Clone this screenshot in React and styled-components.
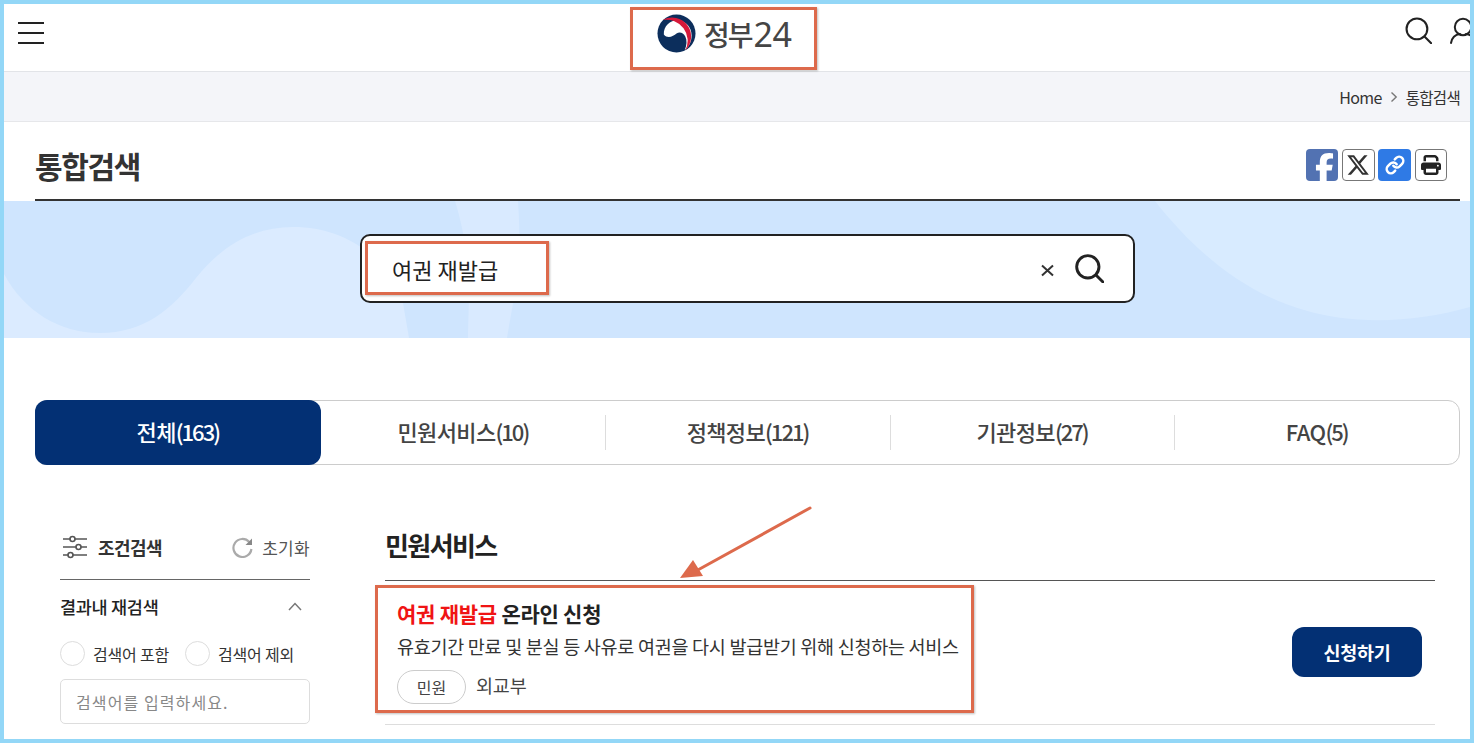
import React from "react";
import styled, { createGlobalStyle } from "styled-components";
import { FaFacebookF, FaXTwitter, FaPrint } from "react-icons/fa6";
import { Link as LinkIcon } from "lucide-react";

const Global = createGlobalStyle`
  html, body { margin: 0; padding: 0; background: #fff; }
  * { box-sizing: border-box; }
  body { font-family: "Noto Sans CJK KR", "Noto Sans", sans-serif; color: #222; }
`;

const Frame = styled.div`
  position: relative;
  width: 1474px;
  height: 743px;
  border: 4px solid #93d7f7;
  overflow: hidden;
  background: #fff;
`;

const Header = styled.header`
  display: flex;
  align-items: center;
  height: 68px;
  padding-left: 14px;
  border-bottom: 1px solid #e2e4e8;
`;

const MenuButton = styled.div`
  display: flex;
  flex-direction: column;
  gap: 8px;
  width: 26px;
  margin-top: -10px;
  span { display: block; height: 2px; background: #222; }
`;

const Logo = styled.div`
  display: flex;
  align-items: center;
  margin: -8px 0 0 613px;
  color: #454545;
  svg { display: block; margin-right: 8px; }
`;

const LogoKo = styled.span`
  font-size: 28px;
  font-weight: 500;
  letter-spacing: -2px;
  line-height: 38px;
  margin-right: 2px;
`;

const LogoNum = styled.span`
  font-family: "Noto Sans", sans-serif;
  font-size: 34px;
  letter-spacing: -0.6px;
  line-height: 38px;
`;

const HeaderIcons = styled.div`
  display: flex;
  gap: 17px;
  margin-left: auto;
  margin-right: -11px;
  margin-top: -14px;
`;

const Crumbs = styled.nav`
  display: flex;
  align-items: center;
  justify-content: flex-end;
  gap: 8px;
  height: 50px;
  padding-right: 10px;
  background: #f4f5f9;
  border-bottom: 1px solid #e6e7ea;
  font-size: 15.5px;
  letter-spacing: -0.7px;
  color: #333;
`;

const CrumbHome = styled.span`
  font-size: 16px;
  letter-spacing: -0.6px;
`;

const TitleRow = styled.div`
  display: flex;
  align-items: center;
  justify-content: space-between;
  height: 79px;
  margin: 0 10px 0 31px;
  padding-right: 13px;
  padding-top: 8px;
  border-bottom: 2px solid #333;
`;

const PageTitle = styled.h1`
  margin: 0;
  font-size: 30px;
  font-weight: 700;
  letter-spacing: -1.35px;
  color: #333;
  line-height: 40px;
`;

const ShareRow = styled.div`
  display: flex;
  gap: 3.67px;
`;

const ShareBtn = styled.div`
  display: flex;
  align-items: center;
  justify-content: center;
  overflow: hidden;
  width: ${(p) => p.$w || 33}px;
  height: 32px;
  border-radius: 4px;
  background: ${(p) => p.$bg || "#fff"};
  border: ${(p) => (p.$bg ? "none" : "1px solid #777")};
  color: ${(p) => (p.$bg ? "#fff" : "#222")};
`;

const Hero = styled.section`
  position: relative;
  height: 137px;
  padding: 33px 0 0 356px;
  background: #cfe5fe;
`;

const HeroArt = styled.svg`
  position: absolute;
  left: 0;
  top: 0;
`;

const SearchBox = styled.div`
  position: relative;
  display: flex;
  align-items: center;
  width: 775px;
  height: 69px;
  padding: 0 29px 0 30px;
  border: 2px solid #222;
  border-radius: 10px;
  background: #fff;
`;

const SearchText = styled.span`
  flex: 1;
  padding-top: 1px;
  font-size: 22px;
  letter-spacing: 0;
  color: #222;
`;

const ClearMark = styled.svg`
  margin: 3px 21px 0 0;
`;

const Tabs = styled.div`
  display: grid;
  grid-template-columns: repeat(5, 1fr);
  height: 65px;
  margin: 62px 10px 0 31px;
  border: 1px solid #ccc;
  border-radius: 12px;
`;

const Tab = styled.div`
  position: relative;
  display: flex;
  align-items: center;
  justify-content: center;
  margin: ${(p) => (p.$active ? "-1px 0 -1px -1px" : "0")};
  padding-bottom: 3px;
  border-radius: ${(p) => (p.$active ? "12px" : "0")};
  background: ${(p) => (p.$active ? "#033074" : "transparent")};
  color: ${(p) => (p.$active ? "#fff" : "#444")};
  font-size: 22px;
  font-weight: 500;
  letter-spacing: -0.65px;
  &::after {
    content: "";
    display: ${(p) => (p.$sep ? "block" : "none")};
    position: absolute;
    right: -1px;
    top: 14px;
    bottom: 14px;
    width: 1px;
    background: #ddd;
  }
`;

const Count = styled.span`
  letter-spacing: -2px;
`;

const Body = styled.div`
  display: flex;
  gap: 75px;
  margin: 0 0 0 56px;
`;

const Side = styled.aside`
  width: 250px;
  padding-top: 64px;
`;

const SideHead = styled.div`
  display: flex;
  align-items: center;
  justify-content: space-between;
  height: 51px;
  padding-bottom: 14px;
  border-bottom: 1px solid #666;
`;

const SideTitle = styled.div`
  display: flex;
  align-items: center;
  gap: 10px;
  margin-left: 2px;
  font-size: 18px;
  font-weight: 700;
  letter-spacing: -0.56px;
  color: #333;
`;

const Reset = styled.div`
  display: flex;
  align-items: center;
  gap: 9px;
  font-size: 17px;
  letter-spacing: 0.3px;
  color: #555;
`;

const SideSub = styled.div`
  display: flex;
  align-items: center;
  justify-content: space-between;
  height: 26px;
  margin-top: 13px;
  padding-right: 8px;
  font-size: 17.5px;
  font-weight: 500;
  letter-spacing: -0.3px;
  color: #222;
`;

const RadioRow = styled.div`
  display: flex;
  align-items: center;
  margin-top: 22px;
  font-size: 16px;
  letter-spacing: -0.2px;
  color: #333;
`;

const Radio = styled.span`
  width: 25px;
  height: 25px;
  margin: ${(p) => (p.$second ? "0 8px 0 16px" : "0 8px 0 0")};
  border: 1px solid #ddd;
  border-radius: 50%;
`;

const SideInput = styled.div`
  display: flex;
  align-items: center;
  height: 45px;
  margin-top: 13px;
  padding-left: 15px;
  border: 1px solid #ddd;
  border-radius: 5px;
  font-size: 16px;
  letter-spacing: 1.1px;
  color: #888;
`;

const Main = styled.main`
  width: 1050px;
  padding-top: 60px;
`;

const SectionTitle = styled.h2`
  display: flex;
  align-items: center;
  height: 56px;
  margin: 0;
  padding-bottom: 17px;
  border-bottom: 1px solid #555;
  font-size: 26px;
  font-weight: 700;
  letter-spacing: -1.6px;
  color: #222;
`;

const ResultRow = styled.article`
  display: flex;
  align-items: center;
  justify-content: space-between;
  height: 144px;
  padding: 0 13px 2px 12px;
  border-bottom: 1px solid #ddd;
`;

const ResultBody = styled.div`
  display: flex;
  flex-direction: column;
`;

const ResultTitle = styled.div`
  font-size: 21px;
  font-weight: 700;
  letter-spacing: -0.25px;
  line-height: 28px;
  color: #222;
  em { font-style: normal; color: #f01414; }
`;

const ResultDesc = styled.div`
  margin-top: 7px;
  font-size: 18.5px;
  letter-spacing: -0.27px;
  line-height: 24px;
  color: #333;
`;

const MetaRow = styled.div`
  display: flex;
  align-items: center;
  gap: 10px;
  margin-top: 12px;
  color: #444;
`;

const Agency = styled.span`
  margin-top: -4px;
  font-size: 18.5px;
  letter-spacing: -0.2px;
`;

const Pill = styled.span`
  display: flex;
  align-items: center;
  justify-content: center;
  width: 69px;
  height: 34px;
  border: 1px solid #ccc;
  border-radius: 17px;
  font-size: 16px;
  color: #444;
`;

const ApplyButton = styled.div`
  display: flex;
  align-items: center;
  justify-content: center;
  width: 130px;
  height: 50px;
  margin-top: 1px;
  border-radius: 12px;
  background: #033074;
  color: #fff;
  font-size: 18.5px;
  font-weight: 700;
  letter-spacing: -0.3px;
`;

const Callout = styled.div`
  position: absolute;
  left: ${(p) => p.$x}px;
  top: ${(p) => p.$y}px;
  width: ${(p) => p.$w}px;
  height: ${(p) => p.$h}px;
  border: 3px solid #dd6a4c;
  box-shadow: 1px 1px 2px rgba(0, 0, 0, 0.25);
  pointer-events: none;
`;

const ArrowLayer = styled.svg`
  position: absolute;
  left: 0;
  top: 0;
  pointer-events: none;
`;

const SearchIcon = ({ size, w = 2 }) => (
  <svg width={size} height={size} viewBox="0 0 26 26" fill="none" stroke="#222" strokeWidth={w} strokeLinecap="round">
    <circle cx="11.5" cy="11.5" r="10" />
    <path d="M19 19l6.2 6.2" />
  </svg>
);

const tabs = [
  ["전체", "(163)", true, false],
  ["민원서비스", "(10)", false, true],
  ["정책정보", "(121)", false, true],
  ["기관정보", "(27)", false, true],
  ["FAQ", "(5)", false, false],
];

export default function App() {
  return (
    <>
      <Global />
      <Frame>
        <Header>
          <MenuButton><span /><span /><span /></MenuButton>
          <Logo>
            <svg width="39" height="39" viewBox="0 0 40 40">
              <circle cx="20" cy="20" r="19.5" fill="#0c2e5c" />
              <path d="M7 21 C6.5 12 14 6 22 6.5 C30 7.5 35.5 14 35.5 22 C35.5 28 33 33.5 28.5 37 C30.5 32 31 27 29 23 C27 19 23 18 20 20 C17 22.5 11 26 7 21Z" fill="#fff" />
              <path d="M6 6.2 A19.5 19.5 0 0 1 29 37.3 A21.5 21.5 0 0 0 6 6.2Z" fill="#d6193a" />
            </svg>
            <LogoKo>정부</LogoKo>
            <LogoNum>24</LogoNum>
          </Logo>
          <HeaderIcons>
            <SearchIcon size={27} />
            <svg width="32" height="27" viewBox="0 0 32 27" fill="none" stroke="#222" strokeWidth="2" strokeLinecap="round">
              <circle cx="14" cy="10" r="8.2" />
              <path d="M2 26 C3 20 7 17.5 11 17 M17 17 C21 17.5 25 20 26 26" />
            </svg>
          </HeaderIcons>
        </Header>
        <Crumbs>
          <CrumbHome>Home</CrumbHome>
          <svg width="8" height="12" viewBox="0 0 8 12" fill="none" stroke="#777" strokeWidth="1.4"><path d="M1.5 1.5L6.2 6l-4.7 4.5" /></svg>
          <span>통합검색</span>
        </Crumbs>
        <TitleRow>
          <PageTitle>통합검색</PageTitle>
          <ShareRow>
            <ShareBtn $bg="#5272b2" $w={32}><FaFacebookF size={30} style={{ marginTop: 6, marginLeft: 5 }} /></ShareBtn>
            <ShareBtn><FaXTwitter size={24} color="#333" /></ShareBtn>
            <ShareBtn $bg="#2f7ae5"><LinkIcon size={20} strokeWidth={3} /></ShareBtn>
            <ShareBtn $w={32}><FaPrint size={20} color="#222" /></ShareBtn>
          </ShareRow>
        </TitleRow>
        <Hero>
          <HeroArt width="1466" height="137" viewBox="0 0 1466 137">
            <path fill="#dbebff" d="M0 73 C20 110 55 132 96 132 C140 132 168 108 192 77 C220 42 252 26 289 26 C320 26 345 36 365 52 L399 102 L405 137 L0 137Z" />
            <path fill="#d9eaff" d="M451 0 C456 16 462 40 464 70 C466 95 464 120 464 137 L503 137 C506 118 512 90 515 60 C516 35 515 15 514 0Z" />
            <path fill="#d8ebff" d="M1151 0 C1190 50 1240 92 1300 109 C1350 124 1410 122 1466 106 L1466 0Z" />
          </HeroArt>
          <SearchBox>
            <SearchText>여권 재발급</SearchText>
            <ClearMark width="13" height="13" viewBox="0 0 13 13" stroke="#333" strokeWidth="2"><path d="M1 1.5l11 10M12 1.5l-11 10" /></ClearMark>
            <SearchIcon size={29} w={2.6} />
          </SearchBox>
        </Hero>
        <Tabs>
          {tabs.map(([label, count, active, sep]) => (
            <Tab key={label} $active={active} $sep={sep}>{label}<Count>{count}</Count></Tab>
          ))}
        </Tabs>
        <Body>
          <Side>
            <SideHead>
              <SideTitle>
                <svg width="26" height="24" viewBox="0 0 26 24" fill="none" stroke="#555" strokeWidth="1.6">
                  <path d="M1 4h7M13 4h12M1 12h13M19 12h6M1 20h5M11 20h14" />
                  <circle cx="10.5" cy="4" r="2.5" /><circle cx="16.5" cy="12" r="2.5" /><circle cx="8.5" cy="20" r="2.5" />
                </svg>
                조건검색
              </SideTitle>
              <Reset>
                <svg width="21" height="21" viewBox="0 0 21 21" fill="none">
                  <path d="M17.2 5 A9 9 0 1 0 19.4 12" stroke="#aaa" strokeWidth="2.2" />
                  <path d="M13.5 8h6.5V1.5z" fill="#888" />
                </svg>
                초기화
              </Reset>
            </SideHead>
            <SideSub>
              결과내 재검색
              <svg width="14" height="9" viewBox="0 0 14 9" fill="none" stroke="#777" strokeWidth="1.5"><path d="M1 8l6-6.5L13 8" /></svg>
            </SideSub>
            <RadioRow>
              <Radio />검색어 포함
              <Radio $second />검색어 제외
            </RadioRow>
            <SideInput>검색어를 입력하세요.</SideInput>
          </Side>
          <Main>
            <SectionTitle>민원서비스</SectionTitle>
            <ResultRow>
              <ResultBody>
                <ResultTitle><em>여권 재발급</em> 온라인 신청</ResultTitle>
                <ResultDesc>유효기간 만료 및 분실 등 사유로 여권을 다시 발급받기 위해 신청하는 서비스</ResultDesc>
                <MetaRow><Pill>민원</Pill><Agency>외교부</Agency></MetaRow>
              </ResultBody>
              <ApplyButton>신청하기</ApplyButton>
            </ResultRow>
          </Main>
        </Body>
        <Callout $x={626} $y={3} $w={187} $h={63} />
        <Callout $x={361} $y={237} $w={184} $h={54} />
        <Callout $x={371} $y={581} $w={599} $h={128} />
        <ArrowLayer width="1466" height="735" viewBox="0 0 1466 735">
          <path d="M806 504 L692 567" stroke="#dd6a4c" strokeWidth="3" strokeLinecap="round" />
          <path d="M676 574 L689 556 L699 572Z" fill="#dd6a4c" />
        </ArrowLayer>
      </Frame>
    </>
  );
}
